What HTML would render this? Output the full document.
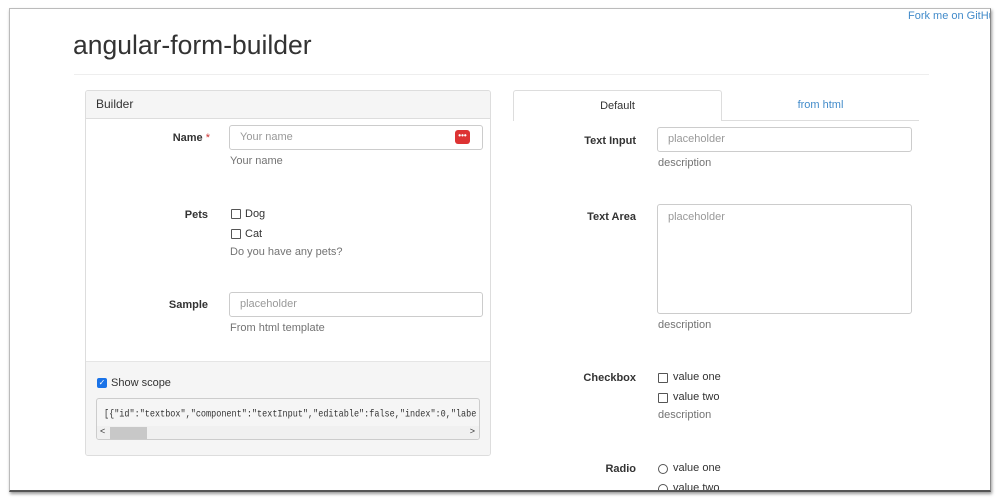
<!DOCTYPE html>
<html><head><style>
*{box-sizing:border-box;margin:0;padding:0}
body{width:1000px;height:500px;background:#fff;position:relative;overflow:hidden;font-family:"Liberation Sans",sans-serif;font-size:11px;color:#333}
.frame{position:absolute;left:9px;top:8px;width:982px;height:484px;border:1px solid #bbb;border-bottom:2px solid #555;border-right:1px solid #888;overflow:hidden;background:#fff;box-shadow:1px 2px 3px rgba(0,0,0,.4)}
.a{position:absolute}
.lbl{position:absolute;font-weight:bold;text-align:right;color:#333}
.inp{position:absolute;border:1px solid #ccc;border-radius:3px;background:#fff;color:#999;padding-left:10px;line-height:23px}
.help{position:absolute;color:#737373}
.cb{position:absolute;width:10px;height:10px;border:1px solid #555;border-radius:1px}
.rd{position:absolute;width:10px;height:10px;border:1px solid #555;border-radius:50%}
</style></head><body>
<div class="frame">
<div class="a" style="left:63px;top:21px;font-size:26.5px;color:#333">angular-form-builder</div>
<div class="a" style="left:898px;top:1px;color:#428bca;font-size:11px;white-space:nowrap">Fork me on GitHub</div>
<div class="a" style="left:64px;top:65px;width:855px;border-top:1px solid #eee"></div>

<div class="a" style="left:75px;top:81px;width:406px;height:366px;border:1px solid #ddd;border-radius:3px;overflow:hidden">
 <div style="height:28px;background:#f5f5f5;border-bottom:1px solid #ddd;padding:6px 10px;font-size:12px">Builder</div>
 <div class="a" style="left:0;top:270px;width:100%;height:96px;background:#f5f5f5;border-top:1px solid #e5e5e5"></div>
</div>
<div class="lbl" style="left:120px;width:80px;top:123px">Name <span style="color:#c33;font-weight:normal">*</span></div>
<div class="inp" style="left:219px;top:116px;width:254px;height:25px">Your name</div>
<div class="a" style="left:445px;top:121px;width:15px;height:14px;background:#d33;border-radius:3px;color:#fff;font-size:8px;text-align:center;line-height:11px;font-weight:bold">•••</div>
<div class="help" style="left:220px;top:146px">Your name</div>
<div class="lbl" style="left:120px;width:78px;top:200px">Pets</div>
<div class="cb" style="left:221px;top:200px"></div><div class="a" style="left:235px;top:199px">Dog</div>
<div class="cb" style="left:221px;top:220px"></div><div class="a" style="left:235px;top:219px">Cat</div>
<div class="help" style="left:220px;top:237px">Do you have any pets?</div>
<div class="lbl" style="left:120px;width:78px;top:290px">Sample</div>
<div class="inp" style="left:219px;top:283px;width:254px;height:25px">placeholder</div>
<div class="help" style="left:220px;top:313px">From html template</div>
<div class="a" style="left:87px;top:369px;width:10px;height:10px;background:#1a73e8;border-radius:2px;color:#fff;font-size:8px;line-height:10px;text-align:center">✓</div>
<div class="a" style="left:101px;top:368px">Show scope</div>
<div class="a" style="left:86px;top:389px;width:384px;height:42px;border:1px solid #ccc;border-radius:3px;background:#f5f5f5;overflow:hidden">
 <div style="font-family:'Liberation Mono',monospace;font-size:8.5px;padding:8px 0 0 7px;white-space:nowrap;transform:scaleY(1.15);transform-origin:left top">[{"id":"textbox","component":"textInput","editable":false,"index":0,"labe</div>
 <div class="a" style="left:0;top:27px;width:100%;height:14px;background:#f0f0f0"></div>
 <div class="a" style="left:13px;top:28px;width:37px;height:12px;background:#c8c8c8"></div>
 <div class="a" style="left:3px;top:27px;font-size:9px">&lt;</div>
 <div class="a" style="right:4px;top:27px;font-size:9px">&gt;</div>
</div>

<div class="a" style="left:503px;top:81px;width:209px;height:31px;border:1px solid #ddd;border-bottom:none;border-radius:3px 3px 0 0;background:#fff;text-align:center;line-height:30px">Default</div>
<div class="a" style="left:712px;top:111px;width:197px;border-top:1px solid #ddd"></div>
<div class="a" style="left:712px;top:81px;width:197px;text-align:center;line-height:30px;color:#428bca">from html</div>
<div class="lbl" style="left:540px;width:86px;top:126px">Text Input</div>
<div class="inp" style="left:647px;top:118px;width:255px;height:25px">placeholder</div>
<div class="help" style="left:648px;top:148px">description</div>
<div class="lbl" style="left:540px;width:86px;top:202px">Text Area</div>
<div class="inp" style="left:647px;top:195px;width:255px;height:110px;line-height:13px;padding-top:6px">placeholder</div>
<div class="help" style="left:648px;top:310px">description</div>
<div class="lbl" style="left:540px;width:86px;top:363px">Checkbox</div>
<div class="cb" style="left:648px;top:364px"></div><div class="a" style="left:663px;top:362px">value one</div>
<div class="cb" style="left:648px;top:384px"></div><div class="a" style="left:663px;top:382px">value two</div>
<div class="help" style="left:648px;top:400px">description</div>
<div class="lbl" style="left:540px;width:86px;top:454px">Radio</div>
<div class="rd" style="left:648px;top:455px"></div><div class="a" style="left:663px;top:453px">value one</div>
<div class="rd" style="left:648px;top:475px"></div><div class="a" style="left:663px;top:473px">value two</div>
</div>
</body></html>
